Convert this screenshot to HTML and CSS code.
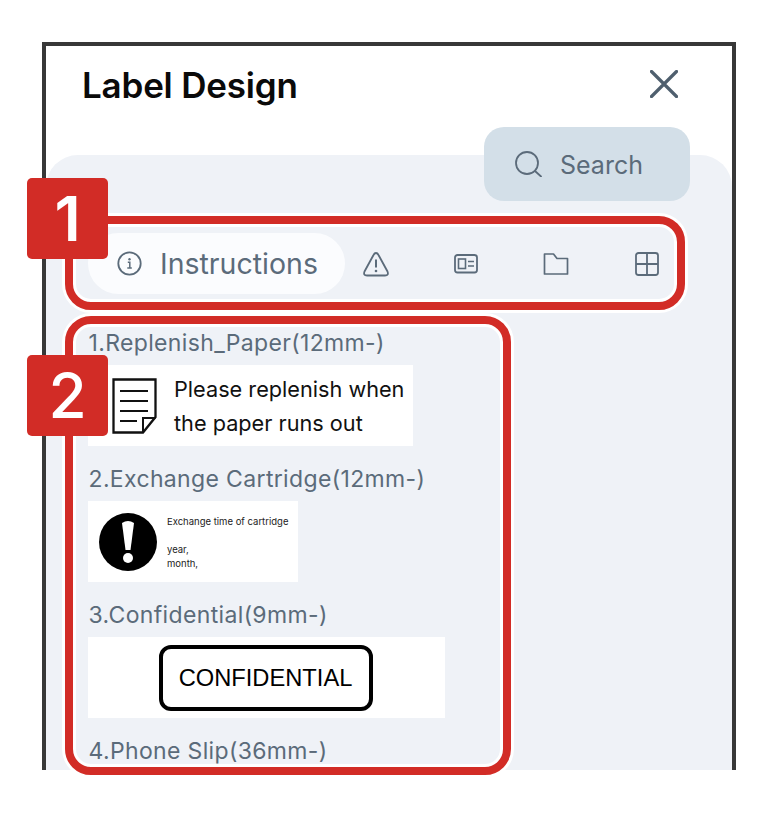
FILE: index.html
```html
<!DOCTYPE html>
<html lang="en">
<head>
<meta charset="utf-8">
<title>Label Design</title>
<link rel="stylesheet" href="styles.css">
</head>
<body>
<div class="page">
  <div class="frame">
    <header class="head">
      <h1 class="title">Label Design</h1>
      <svg class="close" width="28" height="28" viewBox="0 0 28 28"><path d="M1.500 1.500 26.500 26.500M26.500 1.500 1.500 26.500" fill="none" stroke="#4f5f6e" stroke-width="3.200" stroke-linecap="round"/></svg>
    </header>
    <main class="panel">
      <div class="search-row">
        <div class="search">
          <svg width="27" height="26" viewBox="0 0 27 26"><circle cx="12" cy="12" r="11" fill="none" stroke="#5b6b7a" stroke-width="1.800"/><path d="M20 20 26 25.500" stroke="#5b6b7a" stroke-width="1.800" stroke-linecap="round"/></svg>
          <span>Search</span>
        </div>
      </div>
      <nav class="tabs">
        <div class="pill">
          <svg width="25" height="25" viewBox="0 0 25 25"><circle cx="12.500" cy="12.500" r="11.200" fill="none" stroke="#5b6b7a" stroke-width="1.800"/><path d="M10.800 11.300h2v5.500M10.300 17h4.500" fill="none" stroke="#5b6b7a" stroke-width="1.500"/><circle cx="12.500" cy="8.200" r="1.200" fill="#5b6b7a"/></svg>
          <span>Instructions</span>
        </div>
        <div class="icons">
          <svg width="26" height="26" viewBox="0 0 26 26"><path d="M13 2 Q14.500 2 15.500 4 L24.500 20.500 Q26 24.500 22 24.500 H4 Q0 24.500 1.500 20.500 L10.500 4 Q11.500 2 13 2Z" fill="none" stroke="#5b6b7a" stroke-width="1.800" stroke-linejoin="round"/><path d="M13 8.500V16.500" stroke="#5b6b7a" stroke-width="2"/><circle cx="13" cy="20" r="1.300" fill="#5b6b7a"/></svg>
          <svg width="26" height="20" viewBox="0 0 26 20"><rect x="2" y="1" width="22" height="17.500" rx="2.500" fill="none" stroke="#5b6b7a" stroke-width="1.800"/><rect x="5.500" y="5" width="7" height="9.500" fill="none" stroke="#5b6b7a" stroke-width="1.600"/><path d="M15 7.500h6M15 12h6" stroke="#5b6b7a" stroke-width="1.600"/></svg>
          <svg width="26" height="22" viewBox="0 0 26 22"><path d="M1.500 1H10.500L14 5.500H24.500V21H1.500Z" fill="none" stroke="#5b6b7a" stroke-width="1.700" stroke-linejoin="round"/></svg>
          <svg width="26" height="24" viewBox="0 0 26 24"><rect x="2" y="1" width="22" height="22" rx="2.500" fill="none" stroke="#5b6b7a" stroke-width="1.800"/><path d="M13 1V23M2 12H24" stroke="#5b6b7a" stroke-width="1.800"/></svg>
        </div>
      </nav>
      <section class="list">
        <article class="item">
          <h2 class="label">1.Replenish_Paper(12mm-)</h2>
          <div class="sample sample-paper">
            <svg class="doc" width="45" height="56" viewBox="0 0 45 56"><path d="M1.500 1.500H43.500V39L31 54.500H1.500Z" fill="#fff" stroke="#111" stroke-width="2.300"/><path d="M31 54.500V40H43.500" fill="none" stroke="#111" stroke-width="2"/><path d="M8 13H36M8 23H36M8 33H36M8 43H25" stroke="#111" stroke-width="2"/></svg>
            <p class="paper-text">Please replenish when<br>the paper runs out</p>
          </div>
        </article>
        <article class="item">
          <h2 class="label">2.Exchange Cartridge(12mm-)</h2>
          <div class="sample sample-cartridge">
            <svg width="58" height="58" viewBox="0 0 58 58"><circle cx="29" cy="29" r="29" fill="#000"/><path d="M23 10Q29 6 35 10L31.500 37H26.500Z" fill="#fff"/><circle cx="29" cy="45" r="5" fill="#fff"/></svg>
            <p class="cartridge-text">Exchange time of cartridge<br><br>year,<br>month,</p>
          </div>
        </article>
        <article class="item">
          <h2 class="label">3.Confidential(9mm-)</h2>
          <div class="sample sample-confidential">
            <div class="stamp">CONFIDENTIAL</div>
          </div>
        </article>
        <article class="item">
          <h2 class="label">4.Phone Slip(36mm-)</h2>
        </article>
      </section>
    </main>
  </div>
  <div class="callout callout-1"></div>
  <div class="callout callout-2"></div>
  <div class="badge badge-1">1</div>
  <div class="badge badge-2">2</div>
</div>
</body>
</html>
```
FILE: styles.css
```css
* { box-sizing: border-box; }
html, body { margin: 0; padding: 0; background: #fff; }
.page { position: relative; width: 780px; height: 814px; overflow: hidden; padding: 42px 44px 44px 42px; font-family: Inter, "Noto Sans", sans-serif; }
.frame { display: flex; flex-direction: column; width: 694px; height: 728px; border: 4px solid #383838; border-bottom: 0; overflow: hidden; background: #fff; }
.head { flex: none; height: 109px; display: flex; justify-content: space-between; align-items: flex-start; padding: 19px 54px 0 36px; }
.title { margin: 0; font-size: 35px; line-height: 40px; font-weight: 600; color: #0a0a0a; letter-spacing: -0.2px; }
.close { margin-top: 5px; }
.panel { flex: 1; background: #eff2f7; border-radius: 32px 32px 0 0; padding: 0 42px; min-height: 0; }
.search-row { display: flex; justify-content: flex-end; margin-top: -28px; }
.search { width: 206px; height: 74px; border-radius: 20px; background: #d3dfe8; display: flex; align-items: center; gap: 18px; padding-left: 31px; color: #5b6b7a; font-size: 25px; }
.search svg { flex: none; }
.search span { padding-top: 1px; }
.tabs { display: flex; align-items: center; height: 61px; margin-top: 32px; }
.pill { width: 257px; height: 61px; border-radius: 31px; background: #fbfcfe; display: flex; align-items: center; gap: 18px; padding-left: 29px; font-size: 28.500px; color: #5b6b7a; flex: none; }
.pill svg { flex: none; }
.icons { width: 0; flex: 1; display: flex; align-items: center; padding-left: 18px; gap: 64px; }
.icons svg { flex: none; }
.icons svg:last-child { margin-left: 1px; }
.list { display: flex; flex-direction: column; gap: 13px; margin-top: 29px; padding-left: 0.500px; }
.item { display: flex; flex-direction: column; gap: 2px; }
.label { margin: 0; height: 40px; line-height: 40px; font-size: 23px; font-weight: 400; letter-spacing: 0.35px; color: #5b6b7a; white-space: nowrap; }
.sample { height: 81px; margin-left: -0.500px; background: #fff; display: flex; align-items: center; }
.sample-paper { width: 325px; padding-left: 24px; gap: 17px; }
.doc { flex: none; }
.paper-text { margin: 0; font-size: 21.700px; line-height: 34px; color: #111; white-space: nowrap; }
.sample-cartridge { width: 210px; padding-left: 11px; gap: 10px; }
.cartridge-text { margin: 2px 0 0; font-size: 9.500px; line-height: 14px; color: #222; white-space: nowrap; }
.sample-confidential { width: 357px; justify-content: center; padding-right: 2px; }
.stamp { width: 214px; height: 66px; padding-top: 1px; border: 4px solid #000; border-radius: 12px; display: flex; align-items: center; justify-content: center; font-family: "Liberation Sans", Arial, sans-serif; font-size: 23.700px; color: #000; }
.callout { position: absolute; border: 8px solid #d22c26; box-shadow: 0 0 0 3px #fff, inset 0 0 0 3px #fff; border-radius: 26px; }
.callout-1 { left: 65px; top: 216px; width: 620px; height: 94px; }
.callout-2 { left: 65px; top: 316px; width: 446px; height: 459px; }
.badge { position: absolute; left: 27px; width: 81px; height: 81px; border-radius: 5px; background: #d22c26; color: #fff; font-size: 62px; font-weight: 500; line-height: 81px; text-align: center; }
.badge-1 { top: 178px; font-weight: 600; }
.badge-2 { top: 355px; }
```
